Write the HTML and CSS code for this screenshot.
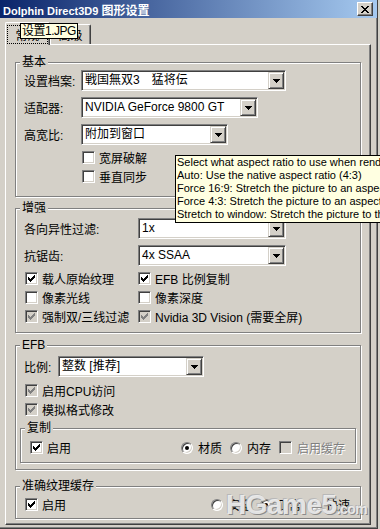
FILE: index.html
```html
<!DOCTYPE html>
<html lang="zh-CN">

<head>
    <meta charset="utf-8">
    <title>Dolphin Direct3D9 图形设置</title>
    <link rel="stylesheet" href="styles.css">
</head>

<body>
    <div class="window">
        <div class="titlebar">
            <span class="title">Dolphin Direct3D9 <span class="zh">图形设置</span></span>
            <span class="close-btn">
                <svg width="8" height="7" viewBox="0 0 8 7" shape-rendering="crispEdges"><path d="M0 0h2v1h1v1h2v-1h1v-1h2v1h-1v1h-1v1h-1v1h1v1h1v1h1v1h-2v-1h-1v-1h-2v1h-1v1h-2v-1h1v-1h1v-1h1v-1h-1v-1h-1v-1h-1z"/></svg>
            </span>
        </div>

        <div class="tabs">
            <div class="tab active"><span class="focus">常规</span></div>
            <div class="tab">高级</div>
        </div>

        <div class="panel">
            <fieldset class="group basic">
                <legend>基本</legend>
                <div class="field">
                    <label>设置档案:</label>
                    <div class="combo w205"><span class="value">戦国無双3　猛将伝</span><span class="drop"><svg width="7" height="4" viewBox="0 0 7 4"><path d="M0 0h7v1h-1v1h-1v1h-1v1h-1v-1h-1v-1h-1v-1h-1z"/></svg></span></div>
                </div>
                <div class="field">
                    <label>适配器:</label>
                    <div class="combo w177"><span class="value">NVIDIA GeForce 9800 GT</span><span class="drop"><svg width="7" height="4" viewBox="0 0 7 4"><path d="M0 0h7v1h-1v1h-1v1h-1v1h-1v-1h-1v-1h-1v-1h-1z"/></svg></span></div>
                </div>
                <div class="field">
                    <label>高宽比:</label>
                    <div class="combo w147"><span class="value">附加到窗口</span><span class="drop"><svg width="7" height="4" viewBox="0 0 7 4"><path d="M0 0h7v1h-1v1h-1v1h-1v1h-1v-1h-1v-1h-1v-1h-1z"/></svg></span></div>
                </div>
                <div class="checks">
                    <div class="checkrow"><span class="check"></span><span class="text">宽屏破解</span></div>
                    <div class="checkrow"><span class="check"></span><span class="text">垂直同步</span></div>
                </div>
            </fieldset>

            <fieldset class="group enhance">
                <legend>增强</legend>
                <div class="field">
                    <label>各向异性过滤:</label>
                    <div class="combo w148"><span class="value">1x</span><span class="drop"><svg width="7" height="4" viewBox="0 0 7 4"><path d="M0 0h7v1h-1v1h-1v1h-1v1h-1v-1h-1v-1h-1v-1h-1z"/></svg></span></div>
                </div>
                <div class="field">
                    <label>抗锯齿:</label>
                    <div class="combo w148"><span class="value">4x SSAA</span><span class="drop"><svg width="7" height="4" viewBox="0 0 7 4"><path d="M0 0h7v1h-1v1h-1v1h-1v1h-1v-1h-1v-1h-1v-1h-1z"/></svg></span></div>
                </div>
                <div class="checkgrid">
                    <div class="checkrow"><span class="check"><svg width="7" height="7" viewBox="0 0 7 7" shape-rendering="crispEdges"><path d="M6 0h1v1h-1zM5 1h2v1h-2zM0 2h1v1h-1zM4 2h3v1h-3zM0 3h2v1h-2zM3 3h3v1h-3zM0 4h5v1h-5zM1 5h3v1h-3zM2 6h1v1h-1z"/></svg></span><span class="text">载人原始纹理</span></div>
                    <div class="checkrow"><span class="check"><svg width="7" height="7" viewBox="0 0 7 7" shape-rendering="crispEdges"><path d="M6 0h1v1h-1zM5 1h2v1h-2zM0 2h1v1h-1zM4 2h3v1h-3zM0 3h2v1h-2zM3 3h3v1h-3zM0 4h5v1h-5zM1 5h3v1h-3zM2 6h1v1h-1z"/></svg></span><span class="text">EFB 比例复制</span></div>
                    <div class="checkrow"><span class="check"></span><span class="text">像素光线</span></div>
                    <div class="checkrow"><span class="check"></span><span class="text">像素深度</span></div>
                    <div class="checkrow"><span class="check grey"><svg width="7" height="7" viewBox="0 0 7 7" shape-rendering="crispEdges"><path d="M6 0h1v1h-1zM5 1h2v1h-2zM0 2h1v1h-1zM4 2h3v1h-3zM0 3h2v1h-2zM3 3h3v1h-3zM0 4h5v1h-5zM1 5h3v1h-3zM2 6h1v1h-1z"/></svg></span><span class="text">强制双/三线过滤</span></div>
                    <div class="checkrow"><span class="check grey"><svg width="7" height="7" viewBox="0 0 7 7" shape-rendering="crispEdges"><path d="M6 0h1v1h-1zM5 1h2v1h-2zM0 2h1v1h-1zM4 2h3v1h-3zM0 3h2v1h-2zM3 3h3v1h-3zM0 4h5v1h-5zM1 5h3v1h-3zM2 6h1v1h-1z"/></svg></span><span class="text">Nvidia 3D Vision (需要全屏)</span></div>
                </div>
            </fieldset>

            <fieldset class="group efb">
                <legend>EFB</legend>
                <div class="field">
                    <label>比例:</label>
                    <div class="combo w146"><span class="value">整数 [推荐]</span><span class="drop"><svg width="7" height="4" viewBox="0 0 7 4"><path d="M0 0h7v1h-1v1h-1v1h-1v1h-1v-1h-1v-1h-1v-1h-1z"/></svg></span></div>
                </div>
                <div class="checks">
                    <div class="checkrow"><span class="check grey"><svg width="7" height="7" viewBox="0 0 7 7" shape-rendering="crispEdges"><path d="M6 0h1v1h-1zM5 1h2v1h-2zM0 2h1v1h-1zM4 2h3v1h-3zM0 3h2v1h-2zM3 3h3v1h-3zM0 4h5v1h-5zM1 5h3v1h-3zM2 6h1v1h-1z"/></svg></span><span class="text">启用CPU访问</span></div>
                    <div class="checkrow"><span class="check grey"><svg width="7" height="7" viewBox="0 0 7 7" shape-rendering="crispEdges"><path d="M6 0h1v1h-1zM5 1h2v1h-2zM0 2h1v1h-1zM4 2h3v1h-3zM0 3h2v1h-2zM3 3h3v1h-3zM0 4h5v1h-5zM1 5h3v1h-3zM2 6h1v1h-1z"/></svg></span><span class="text">模拟格式修改</span></div>
                </div>

                <fieldset class="group copy">
                    <legend>复制</legend>
                    <div class="checkrow">
                        <span class="check"><svg width="7" height="7" viewBox="0 0 7 7" shape-rendering="crispEdges"><path d="M6 0h1v1h-1zM5 1h2v1h-2zM0 2h1v1h-1zM4 2h3v1h-3zM0 3h2v1h-2zM3 3h3v1h-3zM0 4h5v1h-5zM1 5h3v1h-3zM2 6h1v1h-1z"/></svg></span><span class="text">启用</span>
                        <div class="options">
                            <span class="opt"><span class="radio on"></span>材质</span>
                            <span class="opt"><span class="radio"></span>内存</span>
                            <span class="opt"><span class="check off"></span><span class="disabled">启用缓存</span></span>
                        </div>
                    </div>
                </fieldset>
            </fieldset>

            <fieldset class="group cache">
                <legend>准确纹理缓存</legend>
                <div class="checkrow">
                    <span class="check"><svg width="7" height="7" viewBox="0 0 7 7" shape-rendering="crispEdges"><path d="M6 0h1v1h-1zM5 1h2v1h-2zM0 2h1v1h-1zM4 2h3v1h-3zM0 3h2v1h-2zM3 3h3v1h-3zM0 4h5v1h-5zM1 5h3v1h-3zM2 6h1v1h-1z"/></svg></span><span class="text">启用</span>
                    <div class="options">
                        <span class="opt"><span class="radio"></span>安全</span>
                        <span class="opt"><span class="radio on"></span>正常</span>
                        <span class="opt"><span class="radio"></span>快速</span>
                    </div>
                </div>
            </fieldset>
        </div>

        <div class="tooltip tip-tab">设置1.JPG</div>
        <div class="tooltip tip-aspect">
            Select what aspect ratio to use when rendering:<br>
            Auto: Use the native aspect ratio (4:3)<br>
            Force 16:9: Stretch the picture to an aspect ratio of 16:9.<br>
            Force 4:3: Stretch the picture to an aspect ratio of 4:3.<br>
            Stretch to window: Stretch the picture to the window size.
        </div>
        <div class="watermark">HGame5<small>.com</small></div>
    </div>
</body>

</html>
```

FILE: styles.css
```css
/* Windows classic dialog look */
body {
    margin: 0;
    background-color: #d4d0c8;
    color: #000;
    font-family: "Liberation Sans", "Noto Sans CJK SC", sans-serif;
    font-size: 12px;
    overflow: hidden;
}

.window {
    position: relative;
    width: 377px;
    height: 528px;
    border-right: 1px solid #404040;
    border-bottom: 1px solid #404040;
    box-shadow: inset -1px -1px #808080;
    display: flex;
    flex-direction: column;
}

.titlebar {
    height: 18px;
    flex-shrink: 0;
    display: flex;
    align-items: center;
    justify-content: space-between;
    padding: 0 4px 0 3px;
    background: linear-gradient(to right, #0a246a, #a6caf0);
    color: #fff;
    font-weight: bold;
    font-size: 11px;
}

.titlebar .zh {
    font-size: 12px;
}

.close-btn {
    width: 16px;
    height: 14px;
    box-sizing: border-box;
    display: flex;
    align-items: center;
    justify-content: center;
    background-color: #d4d0c8;
    border: 1px solid;
    border-color: #fff #404040 #404040 #fff;
    box-shadow: inset -1px -1px #808080;
}

/* tabs */
.tabs {
    display: flex;
    align-items: flex-start;
    height: 22px;
    flex-shrink: 0;
    margin: 4px 0 0 5px;
}

.tab {
    box-sizing: border-box;
    width: 41px;
    height: 20px;
    margin-top: 2px;
    display: flex;
    align-items: center;
    justify-content: center;
    background-color: #d4d0c8;
    border: 1px solid;
    border-bottom: none;
    border-color: #fff #404040 #fff #fff;
    border-radius: 2px 2px 0 0;
    box-shadow: inset -1px 0 #808080;
}

.tab.active {
    position: relative;
    z-index: 1;
    width: 45px;
    height: 23px;
    margin-top: 0;
    align-items: stretch;
    padding: 2px 1px 1px 1px;
}

.tab .focus {
    flex: 1;
    display: flex;
    align-items: center;
    justify-content: center;
    border: 1px dotted #000;
}

.panel {
    flex: 1;
    margin: 0 6px 3px 5px;
    padding: 0 9px;
    border: 1px solid;
    border-color: #fff #404040 #404040 #fff;
    box-shadow: inset -1px -1px #808080;
}

/* group boxes */
.group {
    margin: 0;
    padding: 0 4px;
    min-width: 0;
    border: 1px solid #808080;
    box-shadow: inset 1px 1px #fff, 1px 1px #fff;
}

.group legend {
    padding: 0 2px;
    line-height: 15px;
    background-color: #d4d0c8;
}

.basic {
    margin-top: 10px;
    padding-bottom: 10px;
}

.enhance {
    margin-top: 4px;
    padding-top: 2px;
    padding-bottom: 6px;
}

.efb {
    margin-top: 5px;
    padding-top: 3px;
    padding-bottom: 6px;
}

.copy {
    margin-top: 2px;
    padding-top: 2px;
    padding-bottom: 5px;
}

.cache {
    margin-top: 9px;
    padding-top: 1px;
    padding-bottom: 4px;
}

/* label + combo rows */
.field {
    display: flex;
    align-items: center;
    height: 21px;
}

.field + .field {
    margin-top: 6px;
}

.field label {
    margin-left: 4px;
    white-space: nowrap;
}

.basic .field label { width: 57px; }
.enhance .field label { width: 114px; }
.efb .field label { width: 34px; }

.combo {
    box-sizing: border-box;
    height: 21px;
    display: flex;
    padding: 1px;
    background-color: #fff;
    border: 1px solid;
    border-color: #808080 #fff #fff #808080;
    box-shadow: inset 1px 1px #404040, inset -1px -1px #d4d0c8;
}

.w205 { width: 205px; }
.w177 { width: 177px; }
.w148 { width: 148px; }
.w147 { width: 147px; }
.w146 { width: 146px; }

.combo .value {
    flex: 1;
    padding-left: 2px;
    line-height: 17px;
    white-space: nowrap;
    overflow: hidden;
}

.combo .drop {
    box-sizing: border-box;
    width: 16px;
    height: 17px;
    display: flex;
    align-items: center;
    justify-content: center;
    background-color: #d4d0c8;
    border: 1px solid;
    border-color: #d4d0c8 #404040 #404040 #d4d0c8;
    box-shadow: inset 1px 1px #fff, inset -1px -1px #808080;
}

/* checkboxes and radios */
.checks {
    margin-top: 3px;
}

.basic .checks {
    margin-left: 62px;
}

.efb .checks {
    margin-top: 4px;
    margin-left: 5px;
}

.checkgrid {
    display: grid;
    grid-template-columns: 113px auto;
    margin-top: 3px;
    margin-left: 5px;
}

.checkrow {
    display: flex;
    align-items: center;
    height: 19px;
    white-space: nowrap;
}

.copy .checkrow,
.cache .checkrow {
    margin-left: 5px;
}

.checkrow .text {
    margin-left: 4px;
}

.check {
    box-sizing: border-box;
    width: 13px;
    height: 13px;
    flex-shrink: 0;
    display: flex;
    align-items: center;
    justify-content: center;
    background-color: #fff;
    border: 1px solid;
    border-color: #808080 #fff #fff #808080;
    box-shadow: inset 1px 1px #404040, inset -1px -1px #d4d0c8;
}

.check.grey,
.check.off {
    background-color: #d4d0c8;
}

.check.grey svg {
    fill: #808080;
}

.radio {
    box-sizing: border-box;
    width: 12px;
    height: 12px;
    flex-shrink: 0;
    display: flex;
    align-items: center;
    justify-content: center;
    border-radius: 50%;
    background-color: #fff;
    border: 1px solid;
    border-color: #808080 #fff #fff #808080;
    box-shadow: inset 1px 1px #404040, inset -1px -1px #d4d0c8;
}

.radio.on::after {
    content: "";
    width: 4px;
    height: 4px;
    border-radius: 50%;
    background-color: #000;
}

.options {
    display: flex;
    align-items: center;
    gap: 8px;
    margin-left: auto;
    margin-right: 6px;
}

.opt {
    display: flex;
    align-items: center;
    gap: 5px;
}

.disabled {
    color: #808080;
    text-shadow: 1px 1px #fff;
}

/* overlays */
.tooltip {
    position: absolute;
    z-index: 2;
    box-sizing: border-box;
    background-color: #ffffe1;
    border: 1px solid #000;
    white-space: nowrap;
    overflow: hidden;
}

.tip-tab {
    left: 20px;
    top: 23px;
    height: 16px;
    padding: 0 1px;
    line-height: 14px;
    letter-spacing: -0.5px;
}

.tip-aspect {
    left: 175px;
    top: 155px;
    width: 240px;
    height: 68px;
    padding: 0 1px;
    font-size: 11px;
    line-height: 13px;
}

.watermark {
    position: absolute;
    z-index: 2;
    left: 226px;
    top: 489px;
    font-size: 28px;
    font-weight: bold;
    line-height: 32px;
    letter-spacing: -0.5px;
    color: rgba(244, 244, 244, 0.85);
    text-shadow: 1px 1px 0 #8c8c8c, -1px -1px 0 #b8b8b8;
}

.watermark small {
    font-size: 14px;
}
```
